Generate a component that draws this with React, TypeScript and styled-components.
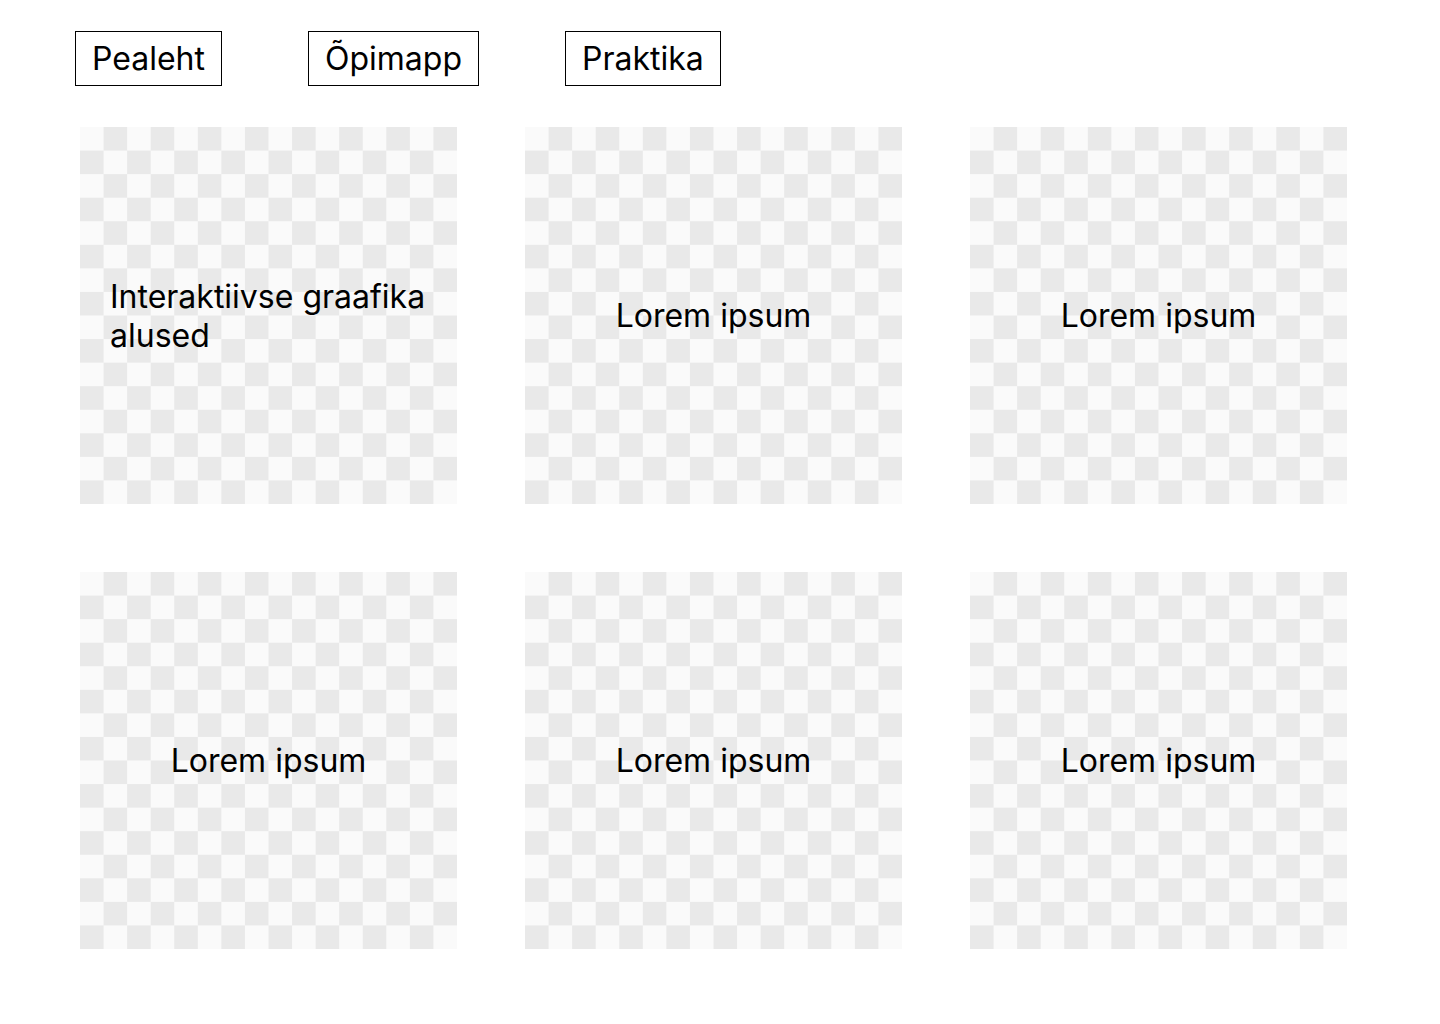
import React from "react";
import styled, { createGlobalStyle } from "styled-components";

const GlobalStyle = createGlobalStyle`
  html, body {
    margin: 0;
    padding: 0;
    background: #ffffff;
    font-family: Inter, "Noto Sans", sans-serif;
    color: #000000;
  }
`;

const Page = styled.div`
  display: flex;
  flex-direction: column;
  padding: 31px 0 0 75px;
`;

const Nav = styled.nav`
  display: flex;
  gap: 86px;
`;

const NavButton = styled.a`
  display: flex;
  align-items: center;
  justify-content: center;
  height: 55px;
  box-sizing: border-box;
  padding: 0 16px;
  border: 1px solid #000000;
  font-size: 32px;
  color: #000000;
  text-decoration: none;
  cursor: pointer;
`;

const Grid = styled.div`
  display: grid;
  grid-template-columns: repeat(3, 377px);
  grid-auto-rows: 377px;
  gap: 68px;
  margin: 41px 0 0 5px;
`;

const SQ = 377 / 16;

const Card = styled.div`
  display: flex;
  align-items: center;
  justify-content: center;
  box-sizing: border-box;
  padding: 0 30px;
  background-image: conic-gradient(
    #e9e9e9 0 25%,
    #fafafa 0 50%,
    #e9e9e9 0 75%,
    #fafafa 0
  );
  background-size: ${SQ * 2}px ${SQ * 2}px;
  background-position: 0 0;
`;

const CardTitle = styled.div`
  font-size: 32px;
  line-height: 39px;
  text-align: left;
`;

const items = [
  "Interaktiivse graafika alused",
  "Lorem ipsum",
  "Lorem ipsum",
  "Lorem ipsum",
  "Lorem ipsum",
  "Lorem ipsum",
];

export default function App() {
  return (
    <>
      <GlobalStyle />
      <Page>
        <Nav>
          <NavButton>Pealeht</NavButton>
          <NavButton>Õpimapp</NavButton>
          <NavButton>Praktika</NavButton>
        </Nav>
        <Grid>
          {items.map((t, i) => (
            <Card key={i}>
              <CardTitle>{t}</CardTitle>
            </Card>
          ))}
        </Grid>
      </Page>
    </>
  );
}
